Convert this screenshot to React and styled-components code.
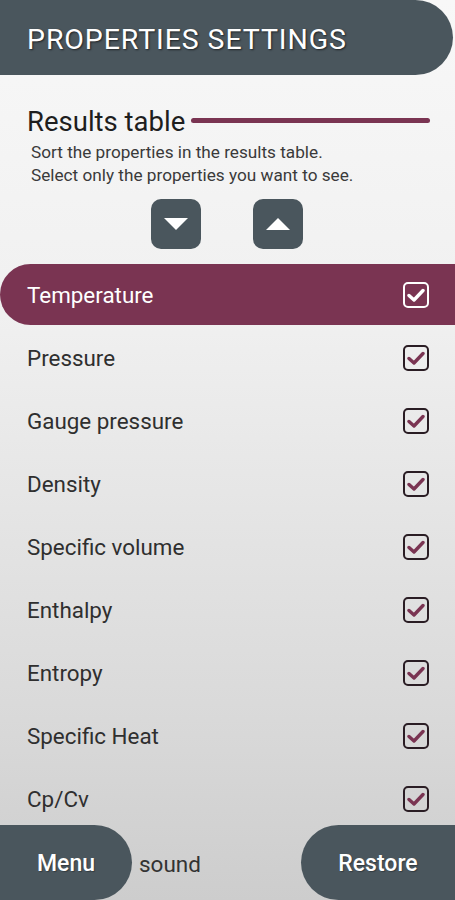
import React, { useState } from 'react';
import styled, { createGlobalStyle } from 'styled-components';

const colors = {
  slate: '#4a565d',
  wine: '#7a3452',
  text: '#2f2f2f',
};

const Global = createGlobalStyle`
  html, body {
    margin: 0;
    padding: 0;
  }
  body {
    font-family: Roboto, "Liberation Sans", sans-serif;
    background: #eee;
  }
`;

const Screen = styled.div`
  position: relative;
  width: 455px;
  height: 900px;
  overflow: hidden;
  background: linear-gradient(180deg, #f8f8f8 0%, #f0f0f0 35%, #d9d9d9 80%, #cdcdcd 100%);
`;

const Header = styled.div`
  height: 75px;
  box-sizing: border-box;
  padding: 4px 0 0 27px;
  display: flex;
  align-items: center;
  background: ${colors.slate};
  border-radius: 0 38px 38px 0;
  margin-right: 2px;
  h1 {
    margin: 0;
    font-size: 28.5px;
    font-weight: 400;
    color: #fff;
    letter-spacing: 0.9px;
    text-shadow: 1px 1px 2px rgba(0, 0, 0, 0.6);
  }
`;

const TitleRow = styled.div`
  display: flex;
  align-items: center;
  gap: 6px;
  padding: 31px 25px 0 27px;
  h2 {
    margin: 0;
    font-size: 27.5px;
    font-weight: 400;
    color: #1e1e1e;
    line-height: 32px;
  }
`;

const Rule = styled.div`
  flex: 1;
  height: 5px;
  border-radius: 3px;
  background: ${colors.wine};
  margin-top: -4px;
`;

const Hint = styled.p`
  margin: 3px 0 0 31px;
  font-size: 17.2px;
  line-height: 23px;
  color: #3a3a3a;
`;

const Sorters = styled.div`
  display: flex;
  justify-content: center;
  gap: 52px;
  margin-top: 12px;
  padding-right: 1px;
`;

const SortButton = styled.button`
  width: 50px;
  height: 50px;
  border: none;
  border-radius: 10px;
  background: ${colors.slate};
  display: flex;
  align-items: center;
  justify-content: center;
  padding: 0;
  cursor: pointer;
`;

const List = styled.div`
  margin-top: 15px;
  display: flex;
  flex-direction: column;
`;

const Row = styled.div`
  display: flex;
  align-items: center;
  justify-content: space-between;
  padding: 0 26px 0 27px;
  box-sizing: border-box;
  font-size: 22.4px;
  color: ${(p) => (p.$active ? '#fff' : colors.text)};
  background: ${(p) => (p.$active ? colors.wine : 'transparent')};
  border-radius: ${(p) => (p.$active ? '31px 0 0 31px' : '0')};
  height: ${(p) => (p.$active ? '61px' : '63px')};
  margin-bottom: ${(p) => (p.$active ? '1px' : '0')};
`;

const Box = styled.span`
  width: 26px;
  height: 26px;
  box-sizing: border-box;
  border: 2.5px solid ${(p) => (p.$active ? '#fff' : '#2a1d24')};
  border-radius: 5px;
  display: flex;
  align-items: center;
  justify-content: center;
`;

const BottomBar = styled.div`
  position: absolute;
  left: 0;
  right: 0;
  bottom: 0;
  height: 75px;
  display: flex;
  align-items: center;
`;

const NavButton = styled.button`
  height: 75px;
  border: none;
  background: ${colors.slate};
  color: #fff;
  font-family: Roboto, "Liberation Sans", sans-serif;
  font-size: 23px;
  font-weight: 500;
  padding: 2px 0 0;
  width: ${(p) => p.$w}px;
  border-radius: ${(p) => (p.$side === 'left' ? '0 38px 38px 0' : '38px 0 0 38px')};
  margin-left: ${(p) => (p.$side === 'right' ? 'auto' : '0')};
  text-shadow: 1px 1px 1px rgba(0, 0, 0, 0.3);
`;

const Sound = styled.span`
  font-size: 22.5px;
  color: #333;
  margin-left: 7px;
  padding-top: 2px;
`;

const props = [
  'Temperature',
  'Pressure',
  'Gauge pressure',
  'Density',
  'Specific volume',
  'Enthalpy',
  'Entropy',
  'Specific Heat',
  'Cp/Cv',
];

const Check = ({ color }) => (
  <svg width="18" height="16" viewBox="0 0 18 16">
    <path d="M2 8.5 L7 13 L16 3.5" fill="none" stroke={color} strokeWidth="3.4" strokeLinecap="round" strokeLinejoin="round" />
  </svg>
);

const App = () => {
  const [selected] = useState(0);
  return (
    <Screen>
      <Global />
      <Header>
        <h1>PROPERTIES SETTINGS</h1>
      </Header>
      <TitleRow>
        <h2>Results table</h2>
        <Rule />
      </TitleRow>
      <Hint>
        Sort the properties in the results table.
        <br />
        Select only the properties you want to see.
      </Hint>
      <Sorters>
        <SortButton aria-label="down">
          <svg width="26" height="14" viewBox="0 0 26 14">
            <path d="M1 1 H25 L13 13 Z" fill="#fff" />
          </svg>
        </SortButton>
        <SortButton aria-label="up">
          <svg width="26" height="14" viewBox="0 0 26 14">
            <path d="M1 13 H25 L13 1 Z" fill="#fff" />
          </svg>
        </SortButton>
      </Sorters>
      <List>
        {props.map((name, i) => (
          <Row key={name} $active={i === selected}>
            <span>{name}</span>
            <Box $active={i === selected}>
              <Check color={i === selected ? '#fff' : colors.wine} />
            </Box>
          </Row>
        ))}
      </List>
      <BottomBar>
        <NavButton $side="left" $w={132}>Menu</NavButton>
        <Sound>sound</Sound>
        <NavButton $side="right" $w={154}>Restore</NavButton>
      </BottomBar>
    </Screen>
  );
};

export default App;
